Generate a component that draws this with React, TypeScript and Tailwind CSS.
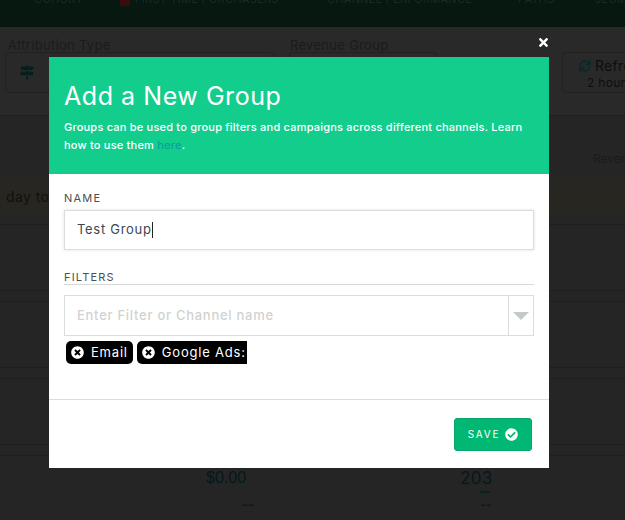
import React from "react";
import { FaCheckCircle, FaTimes, FaTimesCircle, FaSync, FaMapSigns } from "react-icons/fa";

const font = "font-['Inter','Liberation_Sans',sans-serif]";

function Row({ h, children }: { h: string; children?: React.ReactNode }) {
  return <div className={`${h} border-b border-[#1e1e1e] relative`}>{children}</div>;
}

function Chip({ label, square }: { label: string; square?: boolean }) {
  return (
    <div className={`h-[23px] bg-black text-white flex items-center pl-[5px] gap-[7px] text-[13px] tracking-[0.8px] whitespace-nowrap ${square ? "rounded-l-[5px] pr-[1px]" : "rounded-[5px] pr-[5px]"}`}>
      <FaTimesCircle className="w-[13px] h-[13px] shrink-0" />
      <span>{label}</span>
    </div>
  );
}

export default function App() {
  return (
    <div className={`relative w-[625px] h-[520px] overflow-hidden bg-[#252525] ${font}`}>
      {/* dimmed page behind the dialog */}
      <div className="h-[27px] bg-[#06180f] overflow-hidden">
        <div className="flex pl-[34px] -mt-[8px] h-[14px] text-[11px] tracking-[0.3px] whitespace-nowrap text-[#1d2a23] leading-[14px]">
          <span className="w-[86px] shrink-0">COHORT</span>
          <span className="w-[10px] h-[14px] shrink-0 bg-[#3a0d0a]" />
          <span className="w-[197px] shrink-0 pl-[5px]">FIRST TIME PURCHASERS</span>
          <span className="w-[191px] shrink-0">CHANNEL PERFORMANCE</span>
          <span className="w-[76px] shrink-0">PATHS</span>
          <span className="shrink-0">SEGMENTS</span>
        </div>
      </div>
      <div className="h-[89px] bg-[#292929] border-b border-[#1f1f1f] flex pl-[5px] pt-[11px] text-[#1b1b1b] text-[13px] tracking-[0.3px]">
        <div className="w-[284px] shrink-0">
          <div className="pl-[3px] leading-[14px]">Attribution Type</div>
          <div className="w-[270px] h-[41px] border border-[#212121] rounded-[4px] flex items-start pl-[14px] pt-[12px]">
            <FaMapSigns className="w-[14px] h-[15px] text-[#03201c]" />
          </div>
        </div>
        <div className="w-[273px] shrink-0">
          <div className="pl-[1px] leading-[14px]">Revenue Group</div>
          <div className="w-[148px] h-[41px] border border-[#212121] rounded-[4px]" />
        </div>
        <div className="w-[100px] h-[41px] mt-[14px] shrink-0 border border-[#212121] rounded-[4px] pl-[16px] pt-[5px] text-[#0e0e0e] text-[14px] leading-[16px] whitespace-nowrap">
          <div className="flex items-center gap-[4px]"><FaSync className="w-[12px] h-[12px] text-[#062b28]" />Refresh</div>
          <div className="pl-[8px] text-[12px] mt-[1px]">2 hours ago</div>
        </div>
      </div>
      <div className="h-[62px] pl-[593px] pt-[35px] text-[12px] leading-[16px] text-[#1b1b1b] whitespace-nowrap">Revenue</div>
      <div className="h-[36px] bg-[#282620] flex items-center pl-[6px] text-[14px] tracking-[0.4px] text-[#12110c]">day to</div>
      <Row h="h-[11px]" />
      <Row h="h-[66px]" />
      <Row h="h-[11px]" />
      <Row h="h-[66px]" />
      <Row h="h-[11px]" />
      <Row h="h-[66px]" />
      <Row h="h-[11px]" />
      <div className="relative text-[#03191b]">
        <div className="absolute left-[206px] top-[13px] text-[16px] leading-[18px] font-['Liberation_Sans',sans-serif]">$0.00</div>
        <div className="absolute left-[242px] top-[41px] text-[13px] leading-[14px] text-[#161616] font-bold">--</div>
        <div className="absolute left-[460px] top-[13px] text-[17px] leading-[18px] tracking-[0.3px]">203</div>
        <div className="absolute left-[480px] top-[35px] w-[10px] h-[2px] bg-[#05261f]" />
        <div className="absolute left-[480px] top-[41px] text-[13px] leading-[14px] text-[#161616] font-bold">--</div>
      </div>

      <FaTimes className="absolute left-[537px] top-[36px] w-[13px] h-[13px] text-white" />

      {/* dialog */}
      <div className="absolute left-[49px] top-[57px] w-[500px] h-[411px] bg-white flex flex-col">
        <div className="h-[117px] bg-[#13cd8d] text-white px-[15px] pt-[25px]">
          <h1 className="text-[25px] leading-[29px] font-normal tracking-[0.55px] whitespace-nowrap">Add a New Group</h1>
          <p className="mt-[7px] text-[11px] leading-[18px] tracking-[0.21px] font-medium">
            Groups can be used to group filters and campaigns across different channels. Learn how to use them <span className="text-[#0a9fa0]">here</span>.
          </p>
        </div>
        <div className="flex-1 px-[15px] pt-[18px] flex flex-col">
          <label className="text-[11px] leading-[13px] tracking-[1.2px] text-[#4a4e52]">NAME</label>
          <div className="mt-[5px] h-[40px] border border-[#dcdcdc] shadow-[0_0_3px_rgba(0,0,0,0.12)] flex items-center pl-[12px] text-[13px] text-[#3e474f] tracking-[0.7px]">
            Test Group<span className="w-px h-[16px] bg-[#222]" />
          </div>
          <label className="mt-[21px] h-[14px] text-[11px] leading-[13px] tracking-[1.2px] text-[#4a4e52] border-b border-[#d8d8d8]">FILTERS</label>
          <div className="mt-[10px] h-[41px] border border-[#dcdcdc] flex">
            <div className="flex-1 flex items-center pl-[12px] text-[13px] text-[#d2d2d2] font-medium tracking-[0.73px]">Enter Filter or Channel name</div>
            <div className="w-[25px] border-l border-[#dcdcdc] flex items-center justify-center">
              <div className="w-0 h-0 border-l-[8px] border-r-[8px] border-t-[8px] border-l-transparent border-r-transparent border-t-[#c4cac6]" />
            </div>
          </div>
          <div className="mt-[5px] ml-[2px] flex gap-[4px]">
            <Chip label="Email" />
            <Chip label="Google Ads:" square />
          </div>
        </div>
        <div className="h-[69px] border-t border-[#dcdcdc] flex justify-end pt-[18px] pr-[17px]">
          <button className="w-[78px] h-[33px] bg-[#00b873] border border-[#0aa56b] rounded-[3px] text-white text-[10px] tracking-[1.8px] flex items-center justify-center gap-[5px]">
            SAVE
            <FaCheckCircle className="w-[13px] h-[13px]" />
          </button>
        </div>
      </div>
    </div>
  );
}
